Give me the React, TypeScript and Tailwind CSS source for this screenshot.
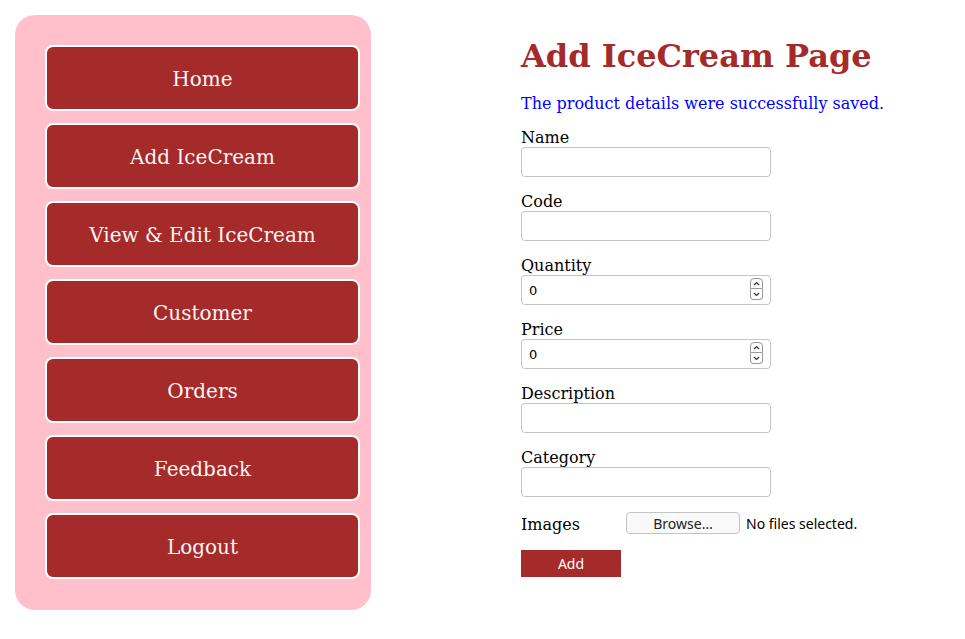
import React from "react";

const serif = { fontFamily: '"DejaVu Serif", serif' };

const menu = ["Home", "Add IceCream", "View & Edit IceCream", "Customer", "Orders", "Feedback", "Logout"];

const Field = ({ label = "", number = false }) => {
  return <div className="mb-[15px]">
      <label className="block text-[16px] leading-[19px] text-black">{label}</label>
      <div className="relative w-[250px]">
        <input type="text" defaultValue={number ? "0" : ""} className="w-[250px] h-[30px] border border-[#c4c4c4] rounded-[4px] px-[7px] pt-[1px] text-[13px] text-black bg-white outline-none" style={{ fontFamily: '"DejaVu Sans", sans-serif' }} />
        {number && <div className="absolute right-[8px] top-[3px] flex flex-col">
            <span className="w-[13px] h-[11px] border border-[#9a9a9a] rounded-t-[4px] flex items-center justify-center">
              <svg width="7" height="5" viewBox="0 0 7 5"><path d="M1 4 L3.5 1.5 L6 4" fill="none" stroke="#333" strokeWidth="1.2" /></svg>
            </span>
            <span className="w-[13px] h-[11px] border border-[#9a9a9a] border-t-0 rounded-b-[4px] flex items-center justify-center">
              <svg width="7" height="5" viewBox="0 0 7 5"><path d="M1 1 L3.5 3.5 L6 1" fill="none" stroke="#333" strokeWidth="1.2" /></svg>
            </span>
          </div>}
      </div>
    </div>;
};

export default function App() {
  return <div className="flex bg-white min-h-[639px] w-[965px]" style={serif}>
      {/* Sidebar */}
      <aside className="ml-[15px] mt-[15px] w-[356px] h-[595px] bg-[#ffc0cb] rounded-[20px] pl-[30px] pr-[11px] pt-[30px] flex flex-col gap-[12px]">
        {menu.map(item => <button key={item} className="shrink-0 h-[66px] w-[315px] bg-[#a52a2a] border-2 border-white rounded-[8px] pt-[2px] text-[#fff5f5] text-[20px]" style={serif}>
            {item}
          </button>)}
      </aside>

      {/* Form */}
      <main className="ml-[150px] pt-[38px]">
        <h1 className="text-[32px] leading-[37px] font-bold text-[#a52a2a]">Add IceCream Page</h1>
        <p className="mt-[19px] text-[16px] leading-[19px] text-[#0000ff]">The product details were successfully saved.</p>
        <form className="mt-[15px]">
          <Field label="Name" />
          <Field label="Code" />
          <Field label="Quantity" number />
          <Field label="Price" number />
          <Field label="Description" />
          <Field label="Category" />
          <div className="flex items-center h-[22px] mt-[1px]">
            <span className="w-[105px] text-[16px] leading-[19px] pt-[2px] text-black">Images</span>
            <button type="button" className="w-[114px] h-[22px] border border-[#c4c4c4] rounded-[4px] bg-[#f9f9f9] text-[14px] text-[#222]" style={{ fontFamily: '"Noto Sans", sans-serif' }}>Browse…</button>
            <span className="ml-[6px] text-[14px] text-black" style={{ fontFamily: '"Noto Sans", sans-serif' }}>No files selected.</span>
          </div>
          <button type="button" className="mt-[16px] w-[100px] h-[27px] bg-[#a52a2a] text-white text-[14px]" style={{ fontFamily: '"Noto Sans", sans-serif' }}>Add</button>
        </form>
      </main>
    </div>;
}
